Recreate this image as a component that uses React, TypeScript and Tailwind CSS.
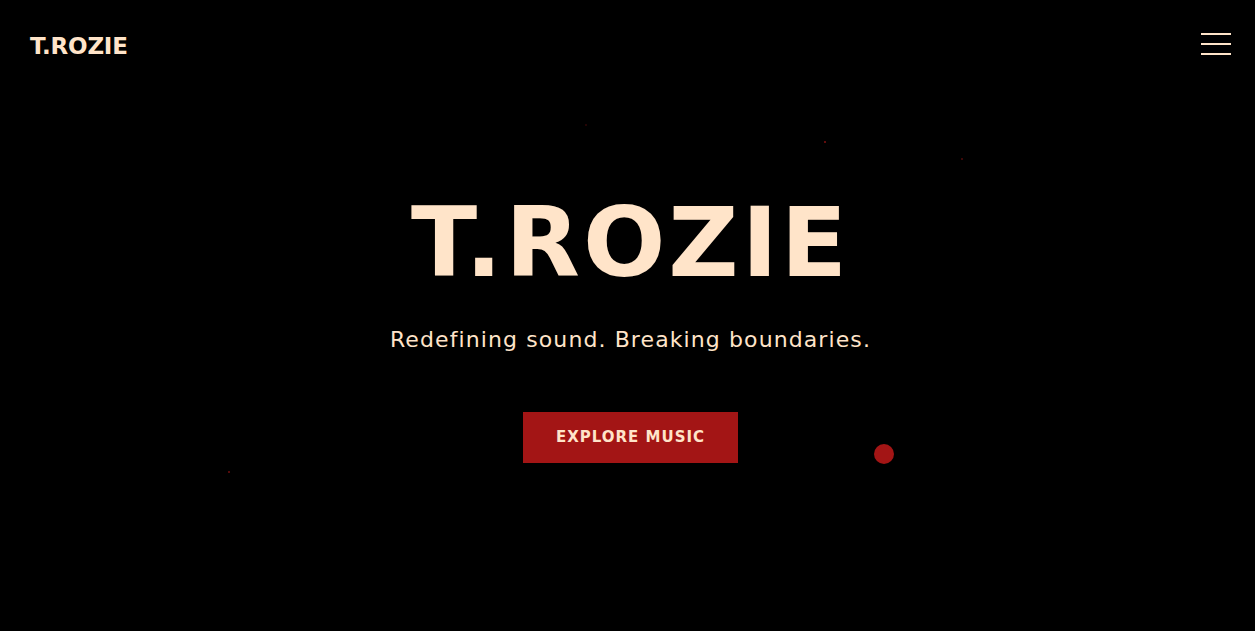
const particles = [
  { left: 824, top: 141, size: 2, opacity: 0.8 },
  { left: 961, top: 158, size: 2, opacity: 0.5 },
  { left: 228, top: 471, size: 2, opacity: 0.7 },
  { left: 585, top: 124, size: 2, opacity: 0.3 },
];

export default function App() {
  return (
    <div
      className="relative h-[631px] w-full overflow-hidden bg-black text-[#ffe4c9]"
      style={{ fontFamily: '"DejaVu Sans", "Liberation Sans", sans-serif' }}
    >
      {/* Floating particles */}
      {particles.map((p, i) => (
        <span
          key={i}
          className="absolute rounded-full bg-[#a31515]"
          style={{ left: p.left, top: p.top, width: p.size, height: p.size, opacity: p.opacity }}
        />
      ))}

      {/* Cursor dot */}
      <span className="absolute left-[874px] top-[444px] h-5 w-5 rounded-full bg-[#a31515]" />

      {/* Header */}
      <header className="flex h-[88px] items-center justify-between pl-[30px] pr-[24px]">
        <a href="#" className="mt-[4px] text-[23px] font-bold leading-none tracking-[-0.2px]">
          T.ROZIE
        </a>
        <button className="flex w-[30px] flex-col gap-2" aria-label="Menu">
          <span className="block h-[2px] w-full bg-[#ffe4c9]" />
          <span className="block h-[2px] w-full bg-[#ffe4c9]" />
          <span className="block h-[2px] w-full bg-[#ffe4c9]" />
        </button>
      </header>

      {/* Hero */}
      <main className="flex flex-col items-center pl-[6px] text-center">
        <h1 className="mt-[106px] text-[97px] font-bold leading-none tracking-[3px]">T.ROZIE</h1>
        <p className="mt-[35px] text-[22px] leading-[28px] tracking-[1.1px]">
          Redefining sound. Breaking boundaries.
        </p>
        <a
          href="#"
          className="mt-[58px] flex h-[51px] w-[215px] items-center justify-center bg-[#a31515] text-[15px] font-bold tracking-[1px]"
        >
          EXPLORE MUSIC
        </a>
      </main>
    </div>
  );
}
